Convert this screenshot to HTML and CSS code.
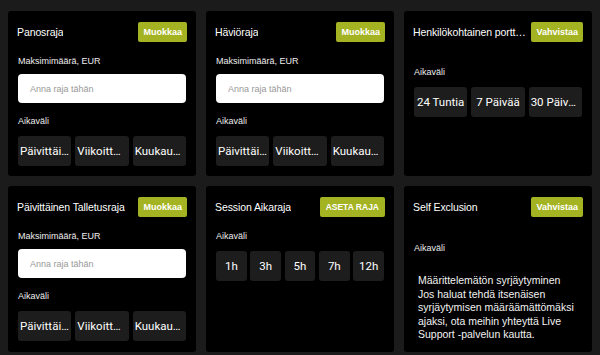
FILE: index.html
```html
<!DOCTYPE html>
<html lang="fi">
<head>
<meta charset="utf-8">
<title>Rajat</title>
<link rel="stylesheet" href="styles.css">
</head>
<body>
<main class="grid">
  <section class="card">
    <div class="card-head">
      <h2 class="card-title">Panosraja</h2>
      <button class="action">Muokkaa</button>
    </div>
    <div class="card-body">
      <div class="label label-first">Maksimimäärä, EUR</div>
      <input class="amount" type="text" placeholder="Anna raja tähän">
      <div class="label label-gap">Aikaväli</div>
      <div class="options options-3">
        <button class="option">Päivittäinen</button>
        <button class="option">Viikoittainen</button>
        <button class="option">Kuukausittainen</button>
      </div>
    </div>
  </section>

  <section class="card">
    <div class="card-head">
      <h2 class="card-title">Häviöraja</h2>
      <button class="action">Muokkaa</button>
    </div>
    <div class="card-body">
      <div class="label label-first">Maksimimäärä, EUR</div>
      <input class="amount" type="text" placeholder="Anna raja tähän">
      <div class="label label-gap">Aikaväli</div>
      <div class="options options-3">
        <button class="option">Päivittäinen</button>
        <button class="option">Viikoittainen</button>
        <button class="option">Kuukausittainen</button>
      </div>
    </div>
  </section>

  <section class="card">
    <div class="card-head">
      <h2 class="card-title">Henkilökohtainen porttikielto</h2>
      <button class="action">Vahvistaa</button>
    </div>
    <div class="card-body">
      <div class="label label-far">Aikaväli</div>
      <div class="options options-3">
        <button class="option">24 Tuntia</button>
        <button class="option">7 Päivää</button>
        <button class="option">30 Päivää</button>
      </div>
    </div>
  </section>

  <section class="card">
    <div class="card-head">
      <h2 class="card-title">Päivittäinen Talletusraja</h2>
      <button class="action">Muokkaa</button>
    </div>
    <div class="card-body">
      <div class="label label-first">Maksimimäärä, EUR</div>
      <input class="amount" type="text" placeholder="Anna raja tähän">
      <div class="label label-gap">Aikaväli</div>
      <div class="options options-3">
        <button class="option">Päivittäinen</button>
        <button class="option">Viikoittainen</button>
        <button class="option">Kuukausittainen</button>
      </div>
    </div>
  </section>

  <section class="card">
    <div class="card-head">
      <h2 class="card-title">Session Aikaraja</h2>
      <button class="action action-caps">Aseta raja</button>
    </div>
    <div class="card-body">
      <div class="label label-first">Aikaväli</div>
      <div class="options options-5">
        <button class="option">1h</button>
        <button class="option">3h</button>
        <button class="option">5h</button>
        <button class="option">7h</button>
        <button class="option">12h</button>
      </div>
    </div>
  </section>

  <section class="card">
    <div class="card-head">
      <h2 class="card-title">Self Exclusion</h2>
      <button class="action">Vahvistaa</button>
    </div>
    <div class="card-body">
      <div class="label label-far2">Aikaväli</div>
      <p class="note">Määrittelemätön syrjäytyminen<br>Jos haluat tehdä itsenäisen syrjäytymisen määräämättömäksi ajaksi, ota meihin yhteyttä Live Support -palvelun kautta.</p>
    </div>
  </section>
</main>
</body>
</html>
```

FILE: styles.css
```css
html, body {
  margin: 0;
  padding: 0;
  background: #1b1b1b;
}

body {
  font-family: "Liberation Sans", Arial, sans-serif;
  color: #fff;
}

.grid {
  display: grid;
  grid-template-columns: repeat(3, 1fr);
  column-gap: 10px;
  row-gap: 10px;
  padding: 11px 8px 0;
}

.card {
  background: #000;
  border-radius: 3px;
  padding: 11px 9px 10px;
  min-width: 0;
}

.card-head {
  display: flex;
  align-items: center;
  justify-content: space-between;
  gap: 4px;
  height: 20px;
}

.card-title {
  margin: 0;
  font-size: 10.5px;
  font-weight: 400;
  letter-spacing: -0.1px;
  color: #fff;
  white-space: nowrap;
  overflow: hidden;
  text-overflow: ellipsis;
  min-width: 0;
}

.action {
  flex: none;
  height: 20px;
  padding: 0 5px;
  border: 0;
  border-radius: 2px;
  background: #a4b321;
  color: #fff;
  font-family: "Liberation Sans", Arial, sans-serif;
  font-size: 9px;
  font-weight: 700;
  line-height: 20px;
}

.action-caps {
  text-transform: uppercase;
  padding: 0 6px;
  font-size: 8.5px;
}

.card-body {
  padding: 0 1px;
}

.label {
  font-size: 9px;
  line-height: 11px;
  color: #eee;
}

.label-first { margin-top: 14px; }
.label-gap { margin-top: 13px; }
.label-far { margin-top: 25px; }
.label-far2 { margin-top: 26px; }

.amount {
  display: block;
  box-sizing: border-box;
  width: 100%;
  height: 29px;
  margin-top: 7px;
  padding: 0 12px;
  border: 0;
  border-radius: 4px;
  background: #fff;
  outline: none;
  font-family: "Liberation Sans", Arial, sans-serif;
  font-size: 9px;
  color: #222;
}

.amount::placeholder {
  color: #999;
}

.options {
  display: grid;
  gap: 4px;
  margin-top: 9px;
}

.options-3 { grid-template-columns: repeat(3, minmax(0, 1fr)); }
.options-5 { grid-template-columns: repeat(5, minmax(0, 1fr)); gap: 3.5px; }

.option {
  height: 30px;
  min-width: 0;
  padding: 0 2px;
  border: 0;
  border-radius: 3px;
  background: #1d1d1d;
  color: #fff;
  font-family: Roboto, "Liberation Sans", sans-serif;
  font-size: 11.5px;
  font-weight: 400;
  white-space: nowrap;
  overflow: hidden;
  text-overflow: ellipsis;
}

.note {
  margin: 20px 0 0;
  padding-left: 4px;
  font-size: 10.5px;
  line-height: 13.5px;
  color: #f2f2f2;
}
```
